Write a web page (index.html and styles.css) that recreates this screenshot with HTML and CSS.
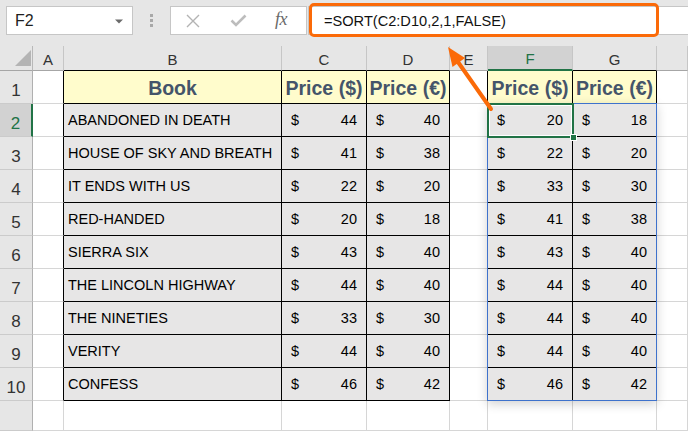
FILE: index.html
```html
<!DOCTYPE html>
<html>
<head>
<meta charset="utf-8">
<link rel="stylesheet" href="styles.css">
</head>
<body>
<div class="app">
  <div class="toolbar">
    <div class="namebox"><span>F2</span><svg class="nb-arrow" width="8" height="5" viewBox="0 0 8 5"><polygon points="0,0.5 8,0.5 4,4.5" fill="#6b6b6b"/></svg></div>
    <div class="dots"><i></i><i></i><i></i></div>
    <div class="funcbox">
      <svg class="ic-x" width="16" height="14" viewBox="0 0 16 14"><path d="M2 1 L14 13 M14 1 L2 13" stroke="#b3b3b3" stroke-width="1.4" fill="none"/></svg>
      <svg class="ic-ok" width="17" height="13" viewBox="0 0 17 13"><path d="M1.5 6.5 L6 11 L15.5 1.5" stroke="#bdbdbd" stroke-width="2.6" fill="none"/></svg>
      <span class="fx">fx</span>
    </div>
    <div class="formula">=SORT(C2:D10,2,1,FALSE)</div>
  </div>

  <div class="sheet-wrap">
  <div class="sheet">
    <div class="c corner"><svg width="32" height="24" viewBox="0 0 32 24"><polygon points="15,20 31,4 31,20" fill="#b4b4b4"/></svg></div>
    <div class="c ch">A</div>
    <div class="c ch tb">B</div>
    <div class="c ch tb">C</div>
    <div class="c ch tb">D</div>
    <div class="c ch">E</div>
    <div class="c ch sel">F</div>
    <div class="c ch tb">G</div>
    <div class="c ch"></div>

    <div class="c rh">1</div>
    <div class="c lb"></div>
    <div class="c t hd">Book</div>
    <div class="c t hd">Price ($)</div>
    <div class="c t hd">Price (€)</div>
    <div class="c lb"></div>
    <div class="c t hd">Price ($)</div>
    <div class="c t hd">Price (€)</div>
    <div class="c"></div>

    <div class="c rh sel">2</div>
    <div class="c lb"></div>
    <div class="c t bk">ABANDONED IN DEATH</div>
    <div class="c t num"><span>$</span><span>44</span></div>
    <div class="c t num"><span>$</span><span>40</span></div>
    <div class="c lb"></div>
    <div class="c t num"><span>$</span><span>20</span></div>
    <div class="c t num"><span>$</span><span>18</span></div>
    <div class="c"></div>

    <div class="c rh">3</div>
    <div class="c lb"></div>
    <div class="c t bk">HOUSE OF SKY AND BREATH</div>
    <div class="c t num"><span>$</span><span>41</span></div>
    <div class="c t num"><span>$</span><span>38</span></div>
    <div class="c lb"></div>
    <div class="c t num"><span>$</span><span>22</span></div>
    <div class="c t num"><span>$</span><span>20</span></div>
    <div class="c"></div>

    <div class="c rh">4</div>
    <div class="c lb"></div>
    <div class="c t bk">IT ENDS WITH US</div>
    <div class="c t num"><span>$</span><span>22</span></div>
    <div class="c t num"><span>$</span><span>20</span></div>
    <div class="c lb"></div>
    <div class="c t num"><span>$</span><span>33</span></div>
    <div class="c t num"><span>$</span><span>30</span></div>
    <div class="c"></div>

    <div class="c rh">5</div>
    <div class="c lb"></div>
    <div class="c t bk">RED-HANDED</div>
    <div class="c t num"><span>$</span><span>20</span></div>
    <div class="c t num"><span>$</span><span>18</span></div>
    <div class="c lb"></div>
    <div class="c t num"><span>$</span><span>41</span></div>
    <div class="c t num"><span>$</span><span>38</span></div>
    <div class="c"></div>

    <div class="c rh">6</div>
    <div class="c lb"></div>
    <div class="c t bk">SIERRA SIX</div>
    <div class="c t num"><span>$</span><span>43</span></div>
    <div class="c t num"><span>$</span><span>40</span></div>
    <div class="c lb"></div>
    <div class="c t num"><span>$</span><span>43</span></div>
    <div class="c t num"><span>$</span><span>40</span></div>
    <div class="c"></div>

    <div class="c rh">7</div>
    <div class="c lb"></div>
    <div class="c t bk">THE LINCOLN HIGHWAY</div>
    <div class="c t num"><span>$</span><span>44</span></div>
    <div class="c t num"><span>$</span><span>40</span></div>
    <div class="c lb"></div>
    <div class="c t num"><span>$</span><span>44</span></div>
    <div class="c t num"><span>$</span><span>40</span></div>
    <div class="c"></div>

    <div class="c rh">8</div>
    <div class="c lb"></div>
    <div class="c t bk">THE NINETIES</div>
    <div class="c t num"><span>$</span><span>33</span></div>
    <div class="c t num"><span>$</span><span>30</span></div>
    <div class="c lb"></div>
    <div class="c t num"><span>$</span><span>44</span></div>
    <div class="c t num"><span>$</span><span>40</span></div>
    <div class="c"></div>

    <div class="c rh">9</div>
    <div class="c lb"></div>
    <div class="c t bk">VERITY</div>
    <div class="c t num"><span>$</span><span>44</span></div>
    <div class="c t num"><span>$</span><span>40</span></div>
    <div class="c lb"></div>
    <div class="c t num"><span>$</span><span>44</span></div>
    <div class="c t num"><span>$</span><span>40</span></div>
    <div class="c"></div>

    <div class="c rh">10</div>
    <div class="c lb"></div>
    <div class="c t bk">CONFESS</div>
    <div class="c t num"><span>$</span><span>46</span></div>
    <div class="c t num"><span>$</span><span>42</span></div>
    <div class="c lb"></div>
    <div class="c t num"><span>$</span><span>46</span></div>
    <div class="c t num"><span>$</span><span>42</span></div>
    <div class="c"></div>

    <div class="c rh"></div>
    <div class="c"></div>
    <div class="c"></div>
    <div class="c"></div>
    <div class="c"></div>
    <div class="c"></div>
    <div class="c"></div>
    <div class="c"></div>
    <div class="c"></div>
  </div>
  <div class="sheet-overlay">
    <div class="spill"></div>
    <div class="active"></div>
  </div>
  </div>

  <div class="callout"></div>
  <svg class="arrow" width="688" height="431" viewBox="0 0 688 431">
    <line x1="491" y1="109" x2="458" y2="62" stroke="#fb6a08" stroke-width="4" stroke-linecap="round"/>
    <polygon points="448,47 465,58 452.5,67" fill="#fb6a08"/>
  </svg>
</div>
</body>
</html>
```

FILE: styles.css
```css
html, body {
  margin: 0;
  padding: 0;
}
body {
  width: 688px;
  height: 431px;
  overflow: hidden;
  background: #fff;
  font-family: "Liberation Sans", Arial, sans-serif;
}
.app {
  position: relative;
  width: 688px;
  height: 431px;
}

/* formula bar */
.toolbar {
  display: flex;
  align-items: flex-start;
  height: 46px;
  box-sizing: border-box;
  padding-top: 6px;
  background: #e6e6e6;
}
.namebox {
  margin-left: 6px;
  width: 127px;
  height: 29px;
  box-sizing: border-box;
  background: #fff;
  border: 1px solid #c6c6c6;
  display: flex;
  align-items: center;
  justify-content: space-between;
  padding: 0 9px 0 8px;
  font-size: 16px;
  color: #1f1f1f;
}
.nb-arrow {
  display: block;
  margin-top: 1px;
}
.dots {
  width: 37px;
  height: 29px;
  display: flex;
  flex-direction: column;
  align-items: center;
  justify-content: center;
  gap: 2px;
}
.dots i {
  display: block;
  width: 3px;
  height: 3px;
  background: #a8a8a8;
}
.funcbox {
  width: 137px;
  height: 29px;
  box-sizing: border-box;
  background: #fff;
  border: 1px solid #c6c6c6;
  display: flex;
  align-items: center;
  padding-left: 14px;
}
.ic-x {
  display: block;
  margin-right: 29px;
}
.ic-ok {
  display: block;
  margin-right: 28px;
}
.fx {
  font-family: "Liberation Serif", "Times New Roman", serif;
  font-style: italic;
  font-size: 18px;
  color: #6a6a6a;
  letter-spacing: -0.5px;
  margin-top: -2px;
}
.formula {
  flex: 1;
  margin-left: 1px;
  height: 29px;
  box-sizing: border-box;
  background: #fff;
  border: 1px solid #c6c6c6;
  border-right: none;
  padding-left: 15px;
  display: flex;
  align-items: center;
  font-size: 14.6px;
  color: #111;
}
.callout {
  position: absolute;
  left: 309px;
  top: 3px;
  width: 350px;
  height: 34px;
  box-sizing: border-box;
  border: 3px solid #fb6a08;
  border-radius: 5px;
}
.arrow {
  position: absolute;
  left: 0;
  top: 0;
  pointer-events: none;
}

/* sheet */
.sheet-wrap {
  position: relative;
  height: 385px;
}
.sheet,
.sheet-overlay {
  display: grid;
  grid-template-columns: 33px 31px 218px 85px 83px 38px 85px 84px 1fr;
  grid-template-rows: 25px repeat(10, 33px) 1fr;
  height: 385px;
}
.sheet-overlay {
  position: absolute;
  left: 0;
  top: 0;
  right: 0;
  pointer-events: none;
}
.c {
  box-sizing: border-box;
  min-width: 0;
  border-right: 1px solid #d6d6d6;
  border-bottom: 1px solid #d6d6d6;
  background: #fff;
  color: #000;
}
.corner {
  background: #e6e6e6;
  border-right-color: #b8b8b8;
  border-bottom-color: #a6a6a6;
}
.corner svg {
  display: block;
}
.ch {
  background: #e6e6e6;
  border-right-color: #c6c6c6;
  border-bottom-color: #a6a6a6;
  display: flex;
  justify-content: center;
  align-items: center;
  padding-top: 2px;
  font-size: 15px;
  color: #333;
}
.ch.tb {
  border-bottom-color: #000;
}
.ch.sel {
  background: #d2d2d2;
  color: #217346;
  border-bottom: 2px solid #217346;
}
.rh {
  background: #e6e6e6;
  border-right-color: #b0b0b0;
  border-bottom-color: #cbcbcb;
  display: flex;
  justify-content: center;
  align-items: center;
  padding-top: 7px;
  font-size: 17px;
  color: #333;
}
.rh.sel {
  background: #d2d2d2;
  color: #217346;
  border-right: 2px solid #217346;
}
.lb {
  border-right-color: #000;
}
.t {
  border-right-color: #000;
  border-bottom-color: #000;
}
.hd {
  background: #fffccc;
  font-weight: bold;
  color: #44546a;
  font-size: 19.5px;
  display: flex;
  justify-content: center;
  align-items: center;
  padding-top: 2px;
  white-space: nowrap;
}
.bk {
  background: #e7e6e6;
  font-size: 14.5px;
  display: flex;
  align-items: center;
  padding-left: 4px;
  white-space: nowrap;
}
.num {
  background: #e7e6e6;
  font-size: 14.5px;
  display: flex;
  align-items: center;
  justify-content: space-between;
  padding: 0 9px 0 9px;
}

/* selection overlays on a grid layered over the sheet */
.spill {
  grid-column: 7 / 9;
  grid-row: 3 / 12;
  margin: -1px 0 0 -1px;
  border: 1px solid #3e72cc;
  box-shadow: 0 3px 10px rgba(0, 0, 0, 0.18);
}
.active {
  grid-column: 7;
  grid-row: 3;
  margin: -1px;
  border: 2px solid #217346;
  box-shadow: inset 0 0 0 1px #fff;
  position: relative;
}
.active::after {
  content: "";
  position: absolute;
  right: -5px;
  bottom: -5px;
  width: 5px;
  height: 5px;
  background: #217346;
  border: 1px solid #fff;
}
```
